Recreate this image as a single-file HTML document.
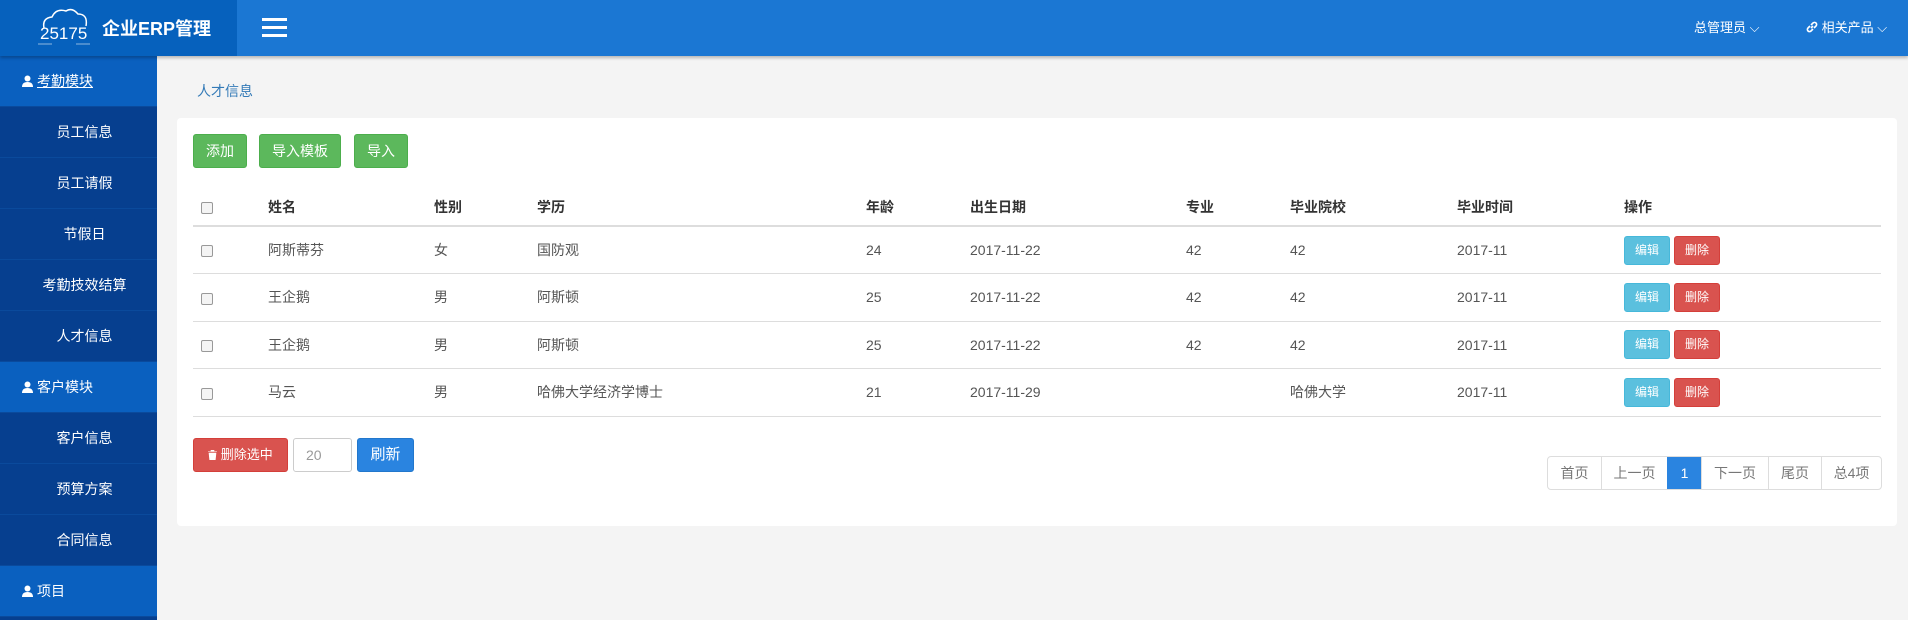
<!DOCTYPE html>
<html><head><meta charset="utf-8"><style>
*{box-sizing:border-box;margin:0;padding:0}
body{width:1908px;height:620px;overflow:hidden;background:#f4f4f4;font-family:"Liberation Sans","Noto Sans CJK SC",sans-serif;font-size:14px;color:#555;position:relative}
.hdr{position:absolute;left:0;top:0;width:1908px;height:56px;background:#1b77d3;box-shadow:0 2px 3px rgba(0,0,0,.25);z-index:2}
.logo{position:absolute;left:0;top:0;width:237px;height:56px;background:#0661bd}
.title{position:absolute;left:102px;top:15px;color:#fff;font-weight:bold;font-size:18px}
.ham{position:absolute;left:262px;top:18px;width:25px}
.ham div{height:3px;background:#fff;margin-bottom:5px}
.tr{position:absolute;top:17px;color:#fff;font-size:13px}
.side{position:absolute;left:0;top:56px;width:157px;height:564px;background:#063f8f}
.side div{height:51px;line-height:51px;color:#fff;font-size:14px;border-bottom:1px solid #0a4a9c}
.side .m{background:#0a60bf;padding-left:22px}
.side .i{text-align:center;padding-left:12px}
.pi{display:inline-block;vertical-align:-1px;margin-right:4px}
.crumb{position:absolute;left:197px;top:81px;color:#337ab7;font-size:14px}
.panel{position:absolute;left:177px;top:118px;width:1720px;height:408px;background:#fff;border-radius:4px}
.btn{position:absolute;color:#fff;font-size:14px;text-align:center;border-radius:3px}
.g{background:#5cb85c;border:1px solid #4cae4c;top:16px;height:34px;line-height:32px}
table{position:absolute;left:16px;top:71px;width:1688px;border-collapse:collapse;font-size:14px;color:#555}
td,th{text-align:left;font-weight:normal;padding:0;height:47.5px;border-bottom:1px solid #ddd;position:relative}
th{color:#333;font-weight:bold;height:37px;border-bottom:2px solid #ddd}
.cb{display:inline-block;width:12px;height:12px;border:1px solid #999;border-radius:2px;background:#f4f4f4;margin-left:8px;vertical-align:middle}
.sb{display:inline-block;color:#fff;font-size:12px;height:29px;line-height:27px;width:46px;text-align:center;border-radius:3px}
.ed{background:#5bc0de;border:1px solid #46b8da}
.dl{background:#d9534f;border:1px solid #d43f3a;margin-left:4px}
.pg{position:absolute;left:1370px;top:338px;height:34px;display:flex;border:1px solid #ddd;border-radius:4px;overflow:hidden}
.pg span{height:32px;line-height:32px;text-align:center;color:#777;font-size:14px;border-left:1px solid #ddd}
.pg span:first-child{border-left:none}
</style></head><body>
<div class="hdr">
<div class="logo">
<svg style="position:absolute;left:38px;top:8px" width="52" height="40" viewBox="0 0 52 40"><path d="M6 20 Q4 10 14 9 Q18 0 28 3 Q34 -1 40 6 Q50 6 48 18" fill="none" stroke="#fff" stroke-width="1.5"/><text x="2" y="31" fill="#fff" font-size="17" font-family="Liberation Sans">25175</text><line x1="0" y1="36" x2="14" y2="36" stroke="#cde" stroke-width=".7"/><line x1="38" y1="36" x2="52" y2="36" stroke="#cde" stroke-width=".7"/></svg>
<div class="title">企业ERP管理</div></div>
<div class="ham"><div></div><div></div><div></div></div>
<div class="tr" style="left:1694px">总管理员 ⌵</div>
<div class="tr" style="left:1806px"><svg width="12" height="12" viewBox="0 0 12 12" style="vertical-align:-1px"><path d="M5 7 L7 5 M4 5 L2 7 A2 2 0 0 0 5 10 L7 8 M8 7 L10 5 A2 2 0 0 0 7 2 L5 4" stroke="#fff" stroke-width="1.6" fill="none"/></svg> 相关产品 ⌵</div>
</div>
<div class="side">
<div class="m"><svg class="pi" width="11" height="12" viewBox="0 0 11 12"><circle cx="5.5" cy="3.5" r="3" fill="#fff"/><path d="M0 12 Q0 7 5.5 7 Q11 7 11 12Z" fill="#fff"/></svg><u>考勤模块</u></div>
<div class="i">员工信息</div><div class="i">员工请假</div><div class="i">节假日</div><div class="i">考勤技效结算</div><div class="i">人才信息</div>
<div class="m"><svg class="pi" width="11" height="12" viewBox="0 0 11 12"><circle cx="5.5" cy="3.5" r="3" fill="#fff"/><path d="M0 12 Q0 7 5.5 7 Q11 7 11 12Z" fill="#fff"/></svg>客户模块</div>
<div class="i">客户信息</div><div class="i">预算方案</div><div class="i">合同信息</div>
<div class="m"><svg class="pi" width="11" height="12" viewBox="0 0 11 12"><circle cx="5.5" cy="3.5" r="3" fill="#fff"/><path d="M0 12 Q0 7 5.5 7 Q11 7 11 12Z" fill="#fff"/></svg>项目</div>
</div>
<div class="crumb">人才信息</div>
<div class="panel">
<div class="btn g" style="left:16px;width:54px">添加</div>
<div class="btn g" style="left:82px;width:82px">导入模板</div>
<div class="btn g" style="left:177px;width:54px">导入</div>
<table>
<tr><th style="width:75px"><span class="cb"></span></th><th style="width:166px">姓名</th><th style="width:103px">性别</th><th style="width:329px">学历</th><th style="width:104px">年龄</th><th style="width:216px">出生日期</th><th style="width:104px">专业</th><th style="width:167px">毕业院校</th><th style="width:167px">毕业时间</th><th>操作</th></tr>
<tr><td><span class="cb"></span></td><td>阿斯蒂芬</td><td>女</td><td>国防观</td><td>24</td><td>2017-11-22</td><td>42</td><td>42</td><td>2017-11</td><td><span class="sb ed">编辑</span><span class="sb dl">删除</span></td></tr>
<tr><td><span class="cb"></span></td><td>王企鹅</td><td>男</td><td>阿斯顿</td><td>25</td><td>2017-11-22</td><td>42</td><td>42</td><td>2017-11</td><td><span class="sb ed">编辑</span><span class="sb dl">删除</span></td></tr>
<tr><td><span class="cb"></span></td><td>王企鹅</td><td>男</td><td>阿斯顿</td><td>25</td><td>2017-11-22</td><td>42</td><td>42</td><td>2017-11</td><td><span class="sb ed">编辑</span><span class="sb dl">删除</span></td></tr>
<tr><td><span class="cb"></span></td><td>马云</td><td>男</td><td>哈佛大学经济学博士</td><td>21</td><td>2017-11-29</td><td></td><td>哈佛大学</td><td>2017-11</td><td><span class="sb ed">编辑</span><span class="sb dl">删除</span></td></tr>
</table>
<div class="btn" style="left:16px;top:320px;width:95px;height:34px;line-height:32px;background:#d9534f;border:1px solid #d43f3a;font-size:13px"><svg width="9" height="10" viewBox="0 0 9 10" style="vertical-align:-1px"><path d="M0 1.5H9M3 1.5V0H6V1.5M1 3H8L7.3 10H1.7Z" fill="#fff" stroke="#fff" stroke-width=".6"/></svg> 删除选中</div>
<div style="position:absolute;left:116px;top:320px;width:59px;height:34px;border:1px solid #ccc;border-radius:3px;line-height:32px;padding-left:12px;color:#999">20</div>
<div class="btn" style="left:180px;top:320px;width:57px;height:34px;line-height:32px;background:#2a84e0;border:1px solid #2277cc;font-size:15px">刷新</div>
<div class="pg"><span style="width:53px">首页</span><span style="width:66px">上一页</span><span style="width:34px;background:#2a84e0;color:#fff;border-color:#2a84e0">1</span><span style="width:67px">下一页</span><span style="width:53px">尾页</span><span style="width:60px">总4项</span></div>
</div>
</body></html>
